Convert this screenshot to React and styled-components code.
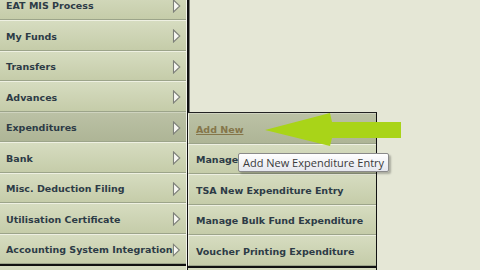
import React from "react";
import styled, { createGlobalStyle } from "styled-components";

const Global = createGlobalStyle`
  html, body { margin: 0; padding: 0; }
  body {
    width: 480px;
    height: 270px;
    overflow: hidden;
    background: #e5e7d6;
    font-family: "DejaVu Sans", Verdana, sans-serif;
  }
`;

const Page = styled.div`
  position: relative;
  display: flex;
  align-items: flex-start;
  width: 480px;
  height: 270px;
  overflow: hidden;
`;

const Nav = styled.div`
  display: flex;
  flex-direction: column;
  width: 186px;
  margin-top: -10.5px;
  flex: none;
`;

const Divider = styled.div`
  width: 4px;
  height: 270px;
  flex: none;
  border-left: 1px solid #f2f3ea;
  border-right: 1px solid #7c7f76;
  background: #111;
  box-sizing: border-box;
  margin-right: 1px;
`;

const Row = styled.div`
  position: relative;
  flex: none;
  height: 30.5px;
  box-sizing: border-box;
  display: flex;
  align-items: center;
  justify-content: space-between;
  padding: 2px 5px 0 6px;
  border-top: 1px solid ${(p) => (p.$active ? "#cfd3bf" : "#eef0e2")};
  border-bottom: 1px solid #9ca48a;
  background: ${(p) =>
    p.$active
      ? "linear-gradient(#bbc1a5, #aeb596)"
      : "linear-gradient(#d6dcc0, #c5cca9)"};
`;

const Label = styled.span`
  font-size: 9.5px;
  font-weight: bold;
  color: ${(p) => (p.$link ? "#85764a" : "#2d3b46")};
  text-decoration: ${(p) => (p.$link ? "underline" : "none")};
  white-space: nowrap;
`;

const EndLine = styled.div`
  height: 2px;
  background: #111;
  flex: none;
`;

const Tail = styled.div`
  height: 20px;
  flex: none;
  background: linear-gradient(#d6dcc0, #c5cca9);
`;

const Flyout = styled.div`
  position: absolute;
  left: 188px;
  top: 112px;
  width: 189px;
  display: flex;
  flex-direction: column;
  border-top: 1px solid #222;
  border-right: 1px solid #111;
  box-sizing: border-box;
`;

const SubRow = styled(Row)`
  padding-left: 7px;
  border-left: 1px solid #eef0e2;
`;

const Arrow = styled.svg`
  position: absolute;
  left: 264px;
  top: 112px;
`;

const Tip = styled.div`
  position: absolute;
  left: 238px;
  top: 153px;
  height: 19px;
  padding: 0 4px;
  box-sizing: border-box;
  display: flex;
  align-items: center;
  font-family: "Open Sans", "Noto Sans", sans-serif;
  font-size: 11px;
  color: #3a3a3a;
  background: linear-gradient(#ffffff, #e6e7ee);
  border: 1px solid #8a8a8a;
  border-radius: 2px;
  box-shadow: 2px 2px 2px rgba(0, 0, 0, 0.25);
  white-space: nowrap;
`;

const Chevron = () => (
  <svg width="9" height="14" viewBox="0 0 9 14">
    <polygon
      points="1.5,1 7.8,7 1.5,13"
      fill="#f7f7f2"
      stroke="#7d8079"
      strokeWidth="1.1"
    />
  </svg>
);

const main = [
  "EAT MIS Process",
  "My Funds",
  "Transfers",
  "Advances",
  "Expenditures",
  "Bank",
  "Misc. Deduction Filing",
  "Utilisation Certificate",
  "Accounting System Integration",
];

const sub = [
  "Add New",
  "Manage",
  "TSA New Expenditure Entry",
  "Manage Bulk Fund Expenditure",
  "Voucher Printing Expenditure",
];

export default function App() {
  return (
    <>
      <Global />
      <Page>
        <Nav>
          {main.map((m) => (
            <Row key={m} $active={m === "Expenditures"}>
              <Label>{m}</Label>
              <Chevron />
            </Row>
          ))}
          <EndLine />
          <Tail />
        </Nav>
        <Divider />
        <Flyout>
          {sub.map((s, i) => (
            <SubRow key={s} $active={i === 0}>
              <Label $link={i === 0}>{s}</Label>
            </SubRow>
          ))}
          <EndLine />
          <Tail />
        </Flyout>
        <Arrow width="140" height="36" viewBox="0 0 140 36">
          <polygon
            points="1,18 66,1 68,10 137,10 137,26 68,26 66,34"
            fill="#a9d418"
          />
        </Arrow>
        <Tip>Add New Expenditure Entry</Tip>
      </Page>
    </>
  );
}
